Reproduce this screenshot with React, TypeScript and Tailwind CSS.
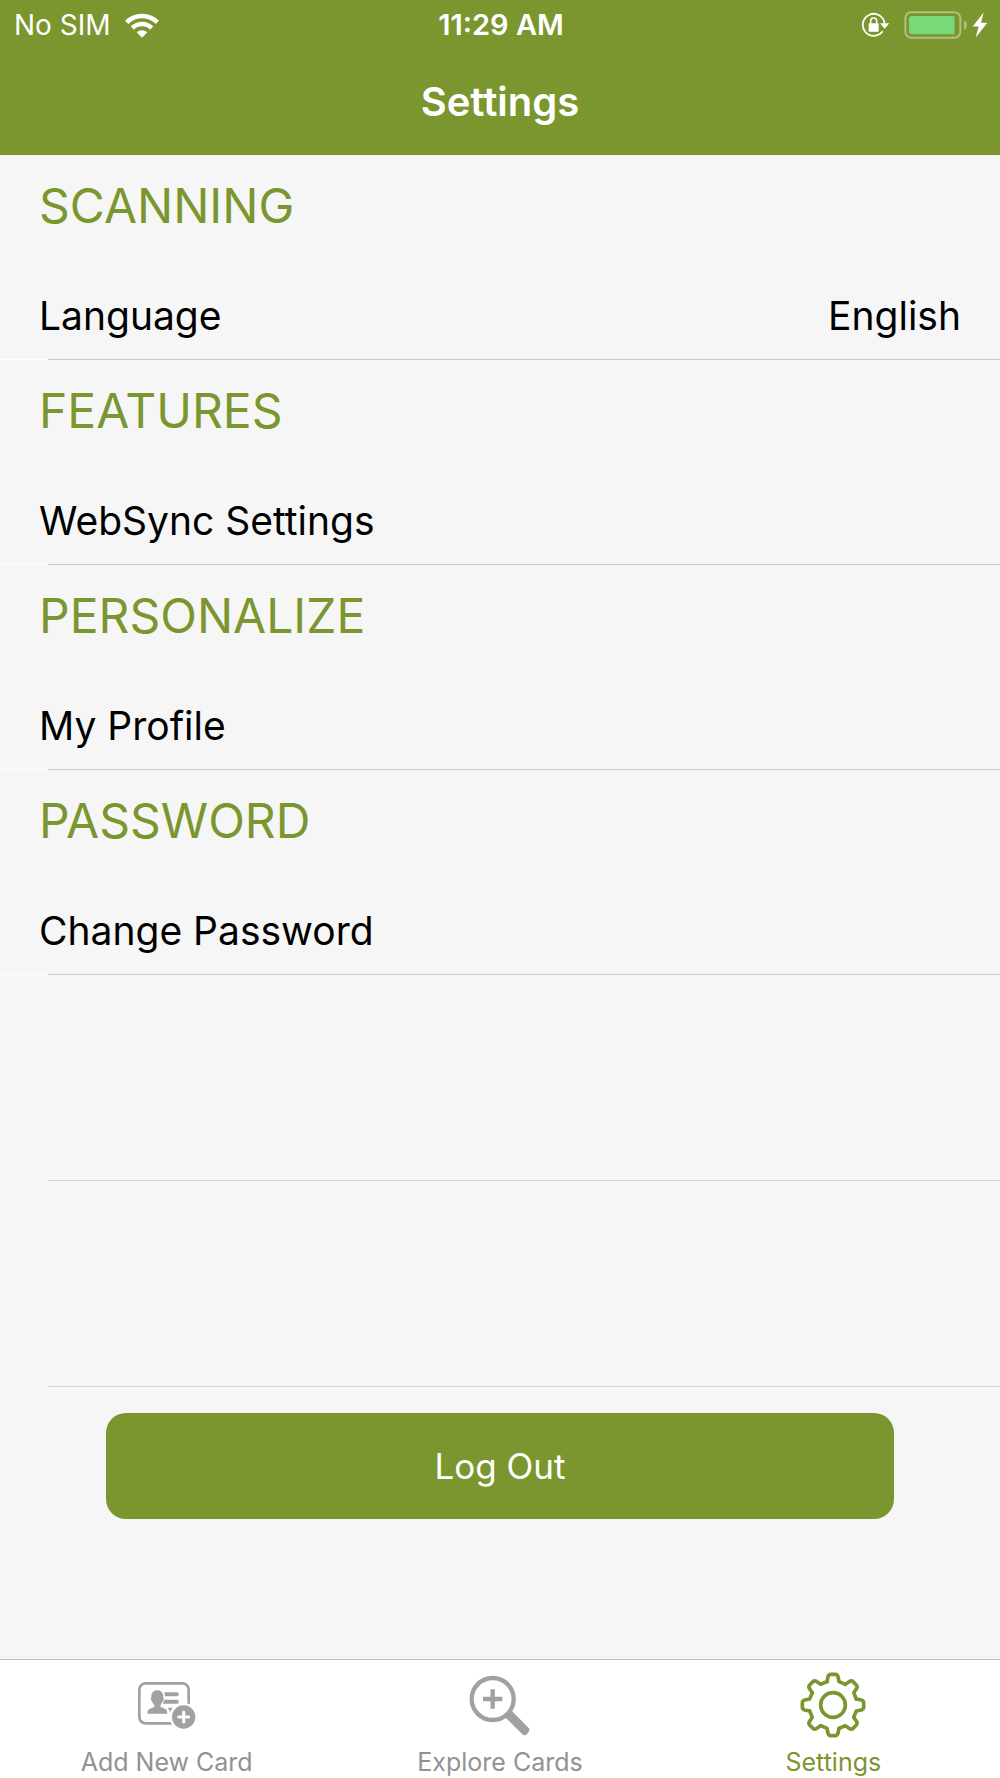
import type { ReactNode } from "react";

const TEETH = [0, 45, 90, 135, 180, 225, 270, 315];

function WifiIcon() {
  return (
    <svg viewBox="-51 -74 102 75" className="h-[25px] w-[34px]" aria-label="Wi-Fi" role="img">
      <g fill="none" stroke="white" strokeWidth="14">
        <path d="M-46-46A65 65 0 0 1 46-46" />
        <path d="M-29-29A41 41 0 0 1 29-29" />
      </g>
      <path d="M0 0L-16-16A23 23 0 0 1 16-16Z" fill="white" />
    </svg>
  );
}

function RotationLockIcon() {
  return (
    <svg viewBox="62 34 87 78" className="h-[26px] w-[29px]" aria-label="Rotation locked" role="img">
      <path d="M127 92A33 33 0 1 1 133 68" fill="none" stroke="white" strokeWidth="5.5" />
      <path d="M119 68H147L133 84Z" fill="white" />
      <rect x="85" y="68" width="30" height="25" rx="2" fill="white" />
      <path d="M91 70V61A9 9 0 0 1 109 61V70" fill="none" stroke="white" strokeWidth="4.5" />
    </svg>
  );
}

function BatteryIcon() {
  return (
    <svg viewBox="189 30 192 84" className="h-7 w-16" aria-label="Battery charging" role="img">
      <rect x="193" y="34" width="165" height="76" rx="17" fill="none" stroke="#b0c07d" strokeWidth="6" />
      <rect x="204" y="45" width="136" height="55" rx="9" fill="#79d877" />
      <rect x="328" y="45" width="12" height="55" fill="#79d877" />
      <path d="M369 58Q378 62 378 72T369 87Z" fill="#b0c07d" />
    </svg>
  );
}

function BoltIcon() {
  return (
    <svg viewBox="398 35 48 77" className="h-[26px] w-4" aria-hidden="true">
      <path d="M433 36L400 78H418L409 111L444 67H425Z" fill="white" />
    </svg>
  );
}

function AddCardIcon() {
  return (
    <svg viewBox="233 94 177 144" className="h-12 w-[59px]" aria-hidden="true">
      <rect x="240" y="101" width="148" height="120" rx="19" fill="none" stroke="#a1a1a1" strokeWidth="8" />
      <g fill="#a1a1a1">
        <path d="M294 122C305 122 312 130 312 141C312 144 314 146 313 150C312 154 309 155 308 159C306 164 303 166 303 171C310 176 324 174 324 192H264C264 174 279 176 286 171C286 166 282 164 280 159C279 155 276 154 275 150C274 146 276 144 276 141C276 130 283 122 294 122Z" />
        <path d="M315 128H354Q358 128 358 134T354 140H317Z" />
        <path d="M315 150H354Q358 150 358 156T354 162H311Z" />
        <path d="M326 174H340L332 187Z" />
      </g>
      <circle cx="373" cy="202" r="42" fill="white" />
      <circle cx="373" cy="202" r="35" fill="#a1a1a1" />
      <path d="M358 202H388M373 187V217" stroke="white" strokeWidth="9" strokeLinecap="round" />
    </svg>
  );
}

function ExploreIcon() {
  return (
    <svg viewBox="206 74 183 183" className="size-[61px]" aria-hidden="true">
      <circle cx="277" cy="146" r="63" fill="none" stroke="#a1a1a1" strokeWidth="13" />
      <path d="M248 146H306M277 117V175" stroke="#a1a1a1" strokeWidth="13" />
      <path d="M316 202L334 181L385 233Q390 239 384 246L380 251Q373 258 366 252Z" fill="#a1a1a1" />
    </svg>
  );
}

function GearIcon() {
  return (
    <svg viewBox="-99 -99 198 198" className="size-[66px]" aria-hidden="true">
      <g fill="none" stroke="#7b962f" strokeWidth="11" strokeLinecap="round" strokeLinejoin="round">
        <circle r="37" />
        {TEETH.map((angle) => (
          <path
            key={angle}
            d="M-18-70L-15-85Q-13-92-7-92H7Q13-92 15-85L18-70L37-62"
            transform={`rotate(${angle})`}
          />
        ))}
      </g>
    </svg>
  );
}

function Section({ title, label, value }: { title: string; label: string; value?: string }) {
  return (
    <section>
      <h2 className="flex h-[102px] items-center px-[39px] text-[48px] leading-none text-[#7b962f]">{title}</h2>
      <button type="button" className="flex h-[102px] w-full items-center justify-between px-[39px] pt-4 text-left text-[39px]">
        <span>{label}</span>
        {value && <span>{value}</span>}
      </button>
      <div className="flex h-px">
        <div className="w-12 bg-white" />
        <div className="grow bg-[#cbcbcc]" />
      </div>
    </section>
  );
}

function Tab({ icon, label, active = false }: { icon: ReactNode; label: string; active?: boolean }) {
  return (
    <a
      href="#"
      aria-current={active ? "page" : undefined}
      className={`flex flex-col items-center text-[25px] ${active ? "text-[#7b962f]" : "text-[#929292]"}`}
    >
      <span className="flex h-[90px] items-center">{icon}</span>
      <span className="-mt-1 leading-8">{label}</span>
    </a>
  );
}

export default function App() {
  return (
    <div className="flex min-h-screen flex-col bg-[#f6f6f6] font-['Inter',sans-serif] text-black">
      <header className="h-[155px] bg-[#7b962f] text-white">
        <div className="grid h-[50px] grid-cols-[1fr_auto_1fr] items-center pl-3.5 pr-3">
          <div className="flex items-center gap-3.5 text-[28px]">
            <span>No SIM</span>
            <WifiIcon />
          </div>
          <time className="text-[29px] font-semibold">11:29 AM</time>
          <div className="flex items-center justify-end gap-1">
            <div className="mr-2.5">
              <RotationLockIcon />
            </div>
            <BatteryIcon />
            <BoltIcon />
          </div>
        </div>
        <h1 className="flex h-[104px] items-center justify-center text-[40px] font-semibold">Settings</h1>
      </header>

      <main className="grow">
        <Section title="SCANNING" label="Language" value="English" />
        <Section title="FEATURES" label="WebSync Settings" />
        <Section title="PERSONALIZE" label="My Profile" />
        <Section title="PASSWORD" label="Change Password" />
        <div className="ml-12 h-[206px] border-b border-[#d4d4d5]" />
        <div className="ml-12 h-[206px] border-b border-[#d4d4d5]" />
        <div className="px-[106px] pt-[26px]">
          <button type="button" className="h-[106px] w-full rounded-[20px] bg-[#7b962f] text-[35px] text-white">
            Log Out
          </button>
        </div>
      </main>

      <nav className="grid h-[119px] grid-cols-3 border-t border-[#bfbfbf] bg-white">
        <Tab icon={<AddCardIcon />} label="Add New Card" />
        <Tab icon={<ExploreIcon />} label="Explore Cards" />
        <Tab icon={<GearIcon />} label="Settings" active />
      </nav>
    </div>
  );
}
